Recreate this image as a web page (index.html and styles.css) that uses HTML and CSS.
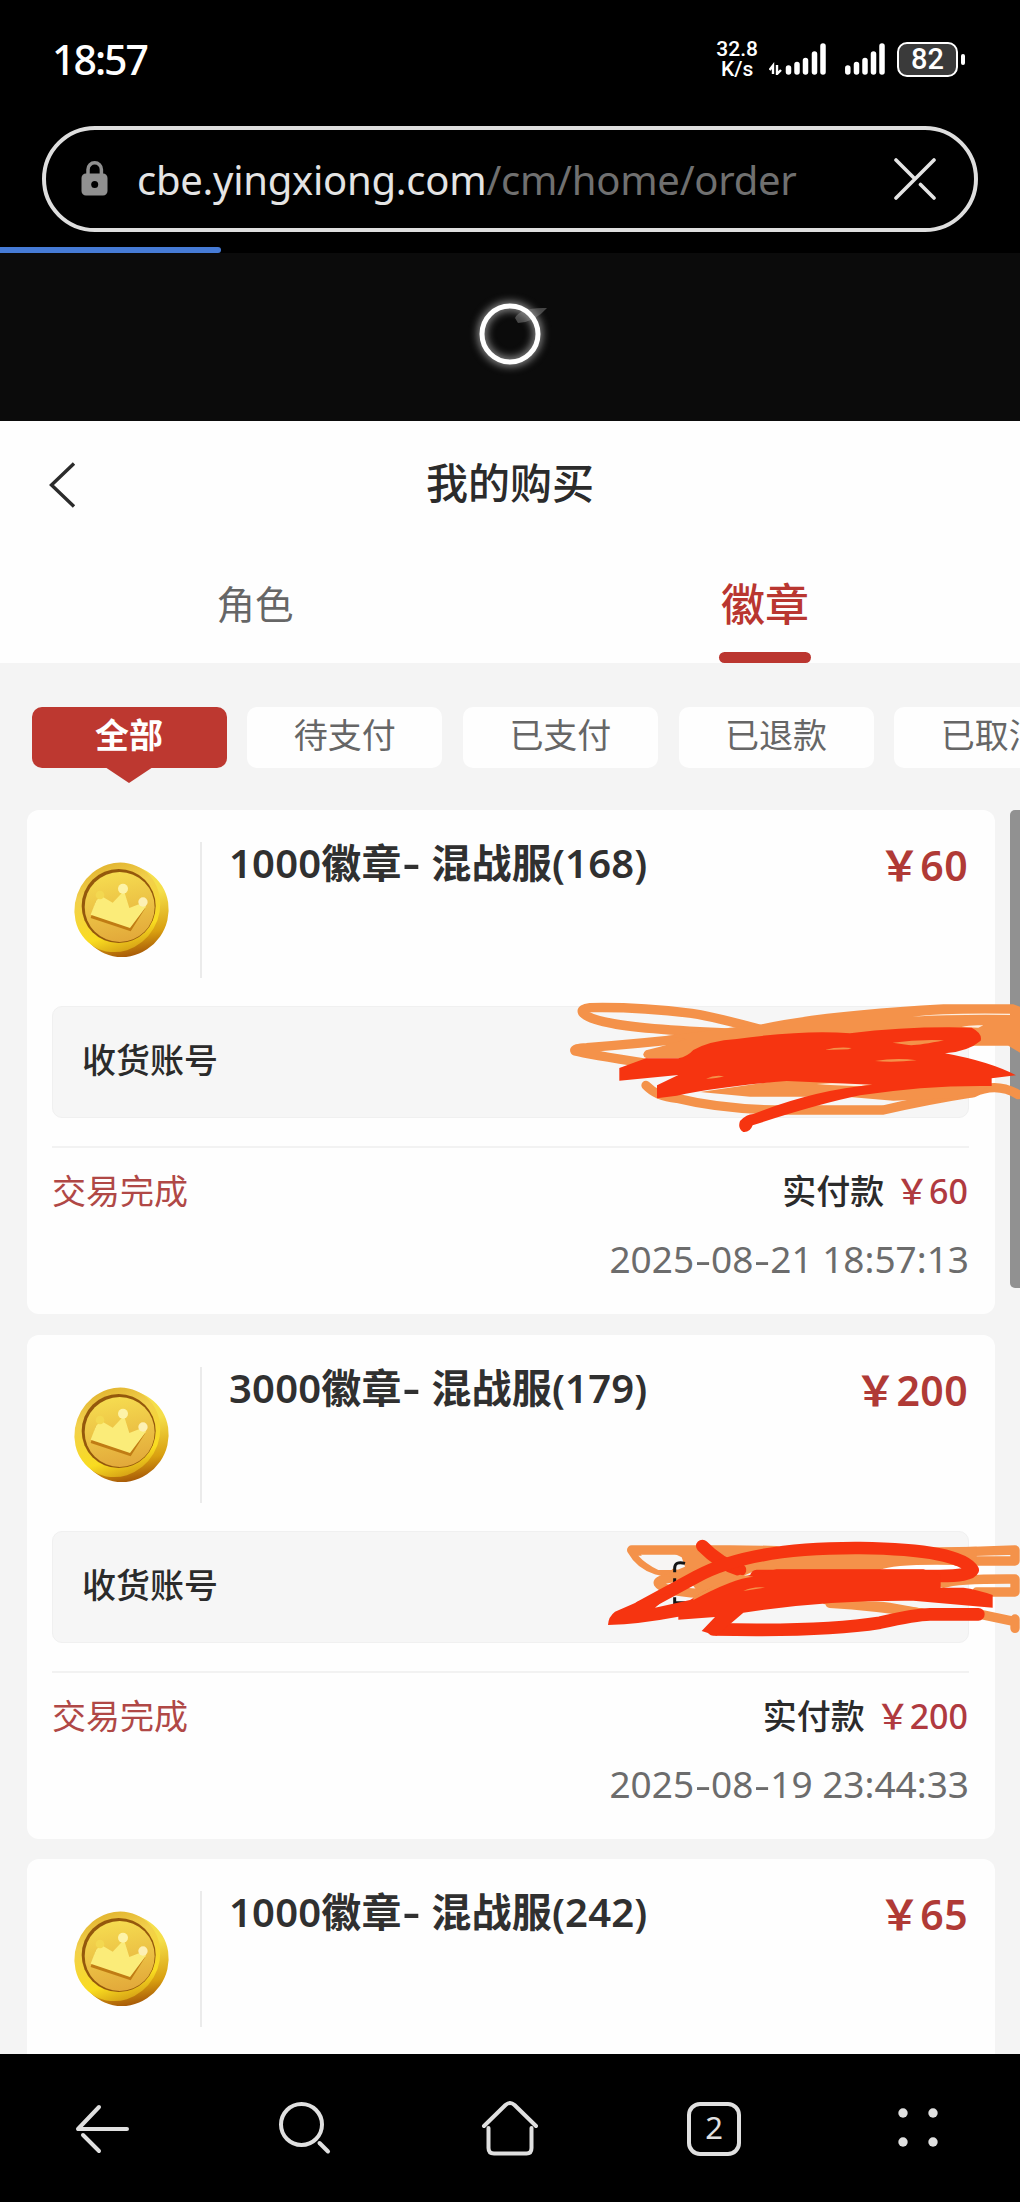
FILE: index.html
```html
<!DOCTYPE html>
<html lang="zh">
<head>
    <meta charset="UTF-8">
    <meta name="viewport" content="width=device-width, initial-scale=1.0">
    <title>我的购买</title>
    <link rel="stylesheet" href="styles.css">
</head>
<body>

<svg width="0" height="0" class="defs">
    <defs>
        <linearGradient id="rim" x1="0" y1="0" x2="1" y2="1">
            <stop offset="0" stop-color="#d9a520"/>
            <stop offset="0.35" stop-color="#f2d04c"/>
            <stop offset="0.7" stop-color="#f9dc20"/>
            <stop offset="1" stop-color="#b8700c"/>
        </linearGradient>
        <linearGradient id="side" x1="0" y1="0" x2="1" y2="1">
            <stop offset="0.4" stop-color="#f5df4a"/>
            <stop offset="0.7" stop-color="#d9a010"/>
            <stop offset="0.85" stop-color="#a95c08"/>
        </linearGradient>
        <linearGradient id="face" x1="0.4" y1="0" x2="0.6" y2="1">
            <stop offset="0" stop-color="#f6dc50"/>
            <stop offset="1" stop-color="#e2a83a"/>
        </linearGradient>
        <!-- 金币图标 -->
        <symbol id="coin" viewBox="0 0 480 420">
            <ellipse cx="221" cy="214" rx="133" ry="139" transform="rotate(35 221 214)" fill="url(#side)"/>
            <ellipse cx="202" cy="202" rx="126" ry="137" transform="rotate(30 202 202)" fill="url(#rim)"/>
            <ellipse cx="206" cy="198" rx="111" ry="111" fill="#94580c"/>
            <ellipse cx="209" cy="201" rx="105" ry="105" fill="url(#face)"/>
            <path d="M122 234L242 274L286 204L276 196L237 219L221 158L187 192L156 174L138 182Z" fill="#c07c14"/>
            <path d="M122 224L240 264L288 200L278 188L238 204L222 152L188 188L154 168L138 182Z" fill="#fbec79"/>
            <circle cx="150" cy="165" r="13" fill="#f3d850"/>
            <circle cx="219" cy="146" r="15" fill="#fdf3a8"/>
            <circle cx="279" cy="186" r="14" fill="#fdf0b4"/>
        </symbol>
    </defs>
</svg>

<div class="phone">
    <div class="status">
        <span class="time">18:57</span>
        <div class="status-right">
            <div class="speed"><span>32.8</span><span>K/s</span></div>
            <svg class="signal" width="57" height="32" viewBox="0 0 57 32">
                <path d="M0.500 27L4 22.500V31M8 22V31L12 27M8 26" fill="none" stroke="#fff" stroke-width="2.400"/>
                <path d="M19.500 25V29M28 21.500V29M36.500 17.500V29M45.500 11V29M54 3V29" stroke="#fff" stroke-width="5.500" stroke-linecap="round"/>
            </svg>
            <svg class="signal2" width="40" height="32" viewBox="0 0 40 32">
                <path d="M2.800 25V29M11.500 21.500V29M20 17.500V29M28.500 11V29M37 3V29" stroke="#fff" stroke-width="5.500" stroke-linecap="round"/>
            </svg>
            <div class="battery"><span>82</span></div>
            <i class="battery-tip"></i>
        </div>
    </div>

    <div class="address">
        <svg width="28" height="36" viewBox="0 0 28 36">
            <path d="M7 14V8.500a6.700 6.700 0 0 1 13.400 0V14" fill="none" stroke="#909090" stroke-width="3.500"/>
            <path d="M5 12.500H22a4.500 4.500 0 0 1 4.500 4.500V30a4.500 4.500 0 0 1-4.500 4.500H5A4.500 4.500 0 0 1 .5 30V17A4.500 4.500 0 0 1 5 12.500Z" fill="#909090"/>
            <circle cx="13.700" cy="23.500" r="3.500" fill="#000"/>
        </svg>
        <div class="url"><span class="host">cbe.yingxiong.com</span><span class="path">/cm/home/order</span></div>
        <svg class="close" width="42" height="42" viewBox="0 0 42 42" fill="none" stroke="#e4e4e4" stroke-width="3.600" stroke-linecap="round">
            <path d="M2 40L40 2M2 2L20 20M26.500 26.500L40 40"/>
        </svg>
    </div>
    <div class="progress"><div class="progress-bar"></div></div>

    <div class="loading">
        <svg width="100" height="100" viewBox="0 0 100 100">
            <path d="M55 34Q60 23 87 24Q75 38 58 39Z" fill="#555" opacity="0.8"/>
            <circle class="glow" cx="50" cy="50" r="28" fill="none" stroke="#999" stroke-width="8"/>
            <circle cx="50" cy="50" r="28" fill="none" stroke="#fff" stroke-width="5"/>
        </svg>
    </div>

    <div class="page">
        <div class="header">
            <svg class="back" width="28" height="48" viewBox="0 0 28 48" fill="none" stroke="#2b2b2b" stroke-width="3.400">
                <path d="M25 2.500L2.500 24L25 45.500"/>
            </svg>
            <h1>我的购买</h1>
        </div>
        <div class="tabs">
            <div class="tab"><span>角色</span></div>
            <div class="tab active"><span>徽章</span></div>
        </div>
        <div class="filters">
            <div class="filter on">全部</div>
            <div class="filter">待支付</div>
            <div class="filter">已支付</div>
            <div class="filter">已退款</div>
            <div class="filter">已取消</div>
        </div>

        <div class="list">
            <div class="card">
                <div class="goods">
                    <div class="pic"><svg width="160" height="140"><use href="#coin"/></svg></div>
                    <div class="name">1000徽章<i>-</i> 混战服(168)</div>
                    <div class="price">￥60</div>
                </div>
                <div class="account">
                    <span>收货账号</span>
                    <svg class="scribble s1" viewBox="0 0 1380 510">
                        <g fill="none" stroke="#f4924a" stroke-width="28" stroke-linecap="round" stroke-linejoin="round">
                            <path d="M600 148Q470 112 395 100Q230 80 90 83Q62 86 68 98Q85 117 145 128Q230 148 520 160"/>
                            <path d="M400 173Q250 190 80 203Q40 205 45 213Q80 222 260 250"/>
                            <path d="M258 316Q290 350 350 355Q500 392 700 390H970Q1100 360 1240 338Q1310 305 1375 344"/>
                        </g>
                        <g fill="#f4924a">
                            <path d="M320 168L510 143L600 134Q780 94 1150 73H1360L1380 80V218L1345 197H1200L480 260L400 235H260Q240 225 258 211L300 200L380 178Z"/>
                            <path d="M420 336L670 300L960 312L1290 316L1240 352L1000 362L860 350H570Z"/>
                        </g>
                        <path d="M1058 110Q1150 98 1350 101V105Q1180 103 1058 110ZM1205 141Q1230 134 1270 136L1255 143Z" fill="#fdeee0"/>
                        <path d="M770 312Q850 306 938 312L900 319Q820 316 770 312Z" fill="#fdeee0"/>
                        <path d="M178 264L258 235H355Q382 230 400 210Q450 182 530 177Q740 148 870 160Q1050 138 1235 143Q1268 160 1262 182Q1225 214 1155 220Q1290 245 1368 286L1295 295V318Q1100 315 900 346Q770 373 578 436Q570 458 550 456Q532 446 540 423Q560 402 580 402Q760 330 938 314L680 303Q480 320 350 347L291 355V316L355 285L178 302Z" fill="#f63410"/>
                        <path d="M998 188Q1070 178 1152 181Q1060 200 1040 194ZM795 210Q830 200 875 204L865 208ZM945 243Q1010 232 1070 241Q1000 248 945 243ZM438 296Q465 284 492 289Q470 296 438 296Z" fill="#f4924a"/>
                    </svg>
                </div>
                <div class="pay">
                    <span class="state">交易完成</span>
                    <span class="sum">实付款 <b>￥60</b></span>
                </div>
                <div class="date">2025<i>-</i>08<i>-</i>21 18:57:13</div>
            </div>

            <div class="card">
                <div class="goods">
                    <div class="pic"><svg width="160" height="140"><use href="#coin"/></svg></div>
                    <div class="name">3000徽章<i>-</i> 混战服(179)</div>
                    <div class="price">￥200</div>
                </div>
                <div class="account">
                    <span>收货账号</span>
                    <svg class="scribble s2" viewBox="0 0 1290 390">
                        <g fill="none" stroke="#f4924a" stroke-width="28" stroke-linecap="round" stroke-linejoin="round">
                            <path d="M560 92Q500 90 420 90H125Q150 135 200 150L290 170Q200 175 205 190Q220 215 330 220"/>
                            <path d="M1130 95L1275 90V123H1150M1060 190Q1100 176 1275 177V216H1160"/>
                            <path d="M720 250Q850 258 1000 280M1175 284L1275 305V325V297"/>
                        </g>
                        <path d="M250 88H600L1160 80V138H960L870 150H500L330 225L290 170H210L285 140L275 112L250 100Z" fill="#f4924a"/>
                        <path d="M145 107H250Q270 115 262 122L245 150L205 150Q165 130 145 107Z" fill="#f7f5f3"/>
                        <path d="M285 130Q254 122 254 145V157M254 175V195M254 232V248H290" fill="none" stroke="#151515" stroke-width="9"/>
                        <path d="M700 245Q850 240 900 248L1000 266V285Q850 270 700 252Z" fill="#f4924a"/>
                        <path d="M870 150Q910 132 1090 135L1115 144L1040 150Z" fill="#fff"/>
                        <g fill="none" stroke="#f63410" stroke-width="38" stroke-linecap="round" stroke-linejoin="round">
                            <path d="M337 78Q390 132 450 150"/>
                            <path d="M150 262L320 170Q480 82 810 84Q1110 88 1148 150Q1140 168 1050 168H500"/>
                            <path d="M370 328Q700 335 870 308Q980 283 1020 283H1165"/>
                        </g>
                        <path d="M54 315Q55 290 75 275L190 225L245 220L195 263L300 240Q390 180 480 165L560 148H1000L1052 165V203H1120Q1160 208 1208 225V263L970 242Q700 240 460 278L424 309L380 347L335 333L375 291L265 299V290Q150 312 54 315Z" fill="#f63410"/>
                        <path d="M310 232Q400 178 450 164L490 170Q430 175 310 240ZM460 213Q490 199 525 203Z" fill="#f4924a"/>
                    </svg>
                </div>
                <div class="pay">
                    <span class="state">交易完成</span>
                    <span class="sum">实付款 <b>￥200</b></span>
                </div>
                <div class="date">2025<i>-</i>08<i>-</i>19 23:44:33</div>
            </div>

            <div class="card">
                <div class="goods">
                    <div class="pic"><svg width="160" height="140"><use href="#coin"/></svg></div>
                    <div class="name">1000徽章<i>-</i> 混战服(242)</div>
                    <div class="price">￥65</div>
                </div>
                <div class="account"></div>
            </div>
            <div class="scrollbar"></div>
        </div>
    </div>

    <div class="toolbar">
        <svg width="60" height="60" viewBox="0 0 60 60"><path d="M6 30H55M27 8L6 30M11 36L27 52"/></svg>
        <svg width="60" height="60" viewBox="0 0 60 60"><circle cx="25.500" cy="25.500" r="20.500"/><path d="M43.500 44L52 52.500"/></svg>
        <svg width="60" height="60" viewBox="0 0 60 60"><path d="M4 27L25.500 6Q30 2 34.500 6L56 27M8.500 29V49Q8.500 54.500 14 54.500H46.500Q51.500 54.500 51.500 49V29"/></svg>
        <div class="pages">2</div>
        <svg class="more" width="60" height="60" viewBox="0 0 60 60"><circle cx="15" cy="14" r="4.700"/><circle cx="45" cy="14" r="4.700"/><circle cx="15" cy="43" r="4.700"/><circle cx="45" cy="43" r="4.700"/></svg>
    </div>
</div>
</body>
</html>
```

FILE: styles.css
```css
body, html {
    margin: 0;
    padding: 0;
    height: 100%;
    background: #000;
    font-family: "Noto Sans", "Noto Sans CJK SC", sans-serif;
}

* {
    box-sizing: border-box;
}

i {
    font-style: normal;
}

.defs {
    position: absolute;
}

.phone {
    width: 1020px;
    height: 2202px;
    display: flex;
    flex-direction: column;
    overflow: hidden;
}

/* 状态栏 */
.status {
    height: 126px;
    padding: 0 55px 8px 52px;
    display: flex;
    align-items: center;
    justify-content: space-between;
    flex-shrink: 0;
    color: #fff;
}
.time {
    font-size: 41px;
    font-weight: 500;
    letter-spacing: -2px;
}
.status-right {
    display: flex;
    align-items: center;
}
.speed {
    display: flex;
    flex-direction: column;
    align-items: center;
    font-family: Roboto, sans-serif;
    font-size: 21px;
    font-weight: 500;
    line-height: 20px;
    margin-right: 11px;
}
.signal2 {
    margin: 0 12px 0 19px;
}
.battery {
    width: 61px;
    height: 35px;
    border: 2.5px solid #fff;
    border-radius: 10px;
    background: #3a3a3a;
    font-family: Roboto, sans-serif;
    font-size: 29px;
    font-weight: 500;
    line-height: 31px;
    text-align: center;
}
.battery-tip {
    width: 4px;
    height: 11px;
    margin-left: 3px;
    border-radius: 2px;
    background: #fff;
}

/* 地址栏 */
.address {
    height: 106px;
    margin: 0 42px;
    padding: 0 38px 0 35px;
    border: 4.5px solid #dedede;
    border-radius: 53px;
    display: flex;
    align-items: center;
    flex-shrink: 0;
}
.url {
    flex: 1;
    margin-left: 28px;
    padding-top: 2px;
    font-size: 40px;
    line-height: 60px;
    letter-spacing: -0.25px;
    color: #e4e4e4;
    white-space: nowrap;
}
.url .path {
    color: #707070;
}
.progress {
    height: 6px;
    margin-top: 15px;
    flex-shrink: 0;
}
.progress-bar {
    width: 221px;
    height: 6px;
    border-radius: 0 3px 3px 0;
    background: #467bd6;
}

.loading {
    height: 168px;
    background: #0b0b0b;
    display: flex;
    align-items: center;
    justify-content: center;
    flex-shrink: 0;
    padding-bottom: 6px;
}
.glow {
    filter: blur(4px);
}

.page {
    flex: 1;
    min-height: 0;
    overflow: hidden;
    background: #f4f4f4;
}
.header {
    height: 127px;
    padding: 0 49px;
    display: flex;
    align-items: center;
    background: #fefefe;
}
.header h1 {
    flex: 1;
    margin: 0 28px 9px 0;
    text-align: center;
    font-size: 42px;
    font-weight: 500;
    color: #2b2b2b;
}
.tabs {
    height: 115px;
    display: flex;
    background: #fefefe;
}
.tab {
    flex: 1;
    display: flex;
    flex-direction: column;
    align-items: center;
    justify-content: space-between;
    font-size: 38.5px;
    line-height: 112px;
    color: #666;
}
.tab.active {
    font-size: 44px;
    font-weight: 500;
    color: #b93630;
}
.tab span {
    height: 104px;
}
.tab.active::after {
    content: "";
    width: 92px;
    height: 11px;
    border-radius: 6px;
    background: #bb3630;
}

/* 订单状态筛选 */
.filters {
    display: flex;
    gap: 20.7px;
    padding: 44px 0 42px 31.5px;
}
.filter {
    position: relative;
    width: 195px;
    height: 61px;
    flex-shrink: 0;
    border-radius: 10px;
    background: #fefefe;
    color: #666;
    font-size: 34px;
    line-height: 57px;
    text-align: center;
}
.filter.on {
    background: #bd3830;
    color: #fff;
    font-weight: bold;
}
.filter.on::after {
    content: "";
    position: absolute;
    left: 73px;
    bottom: -15px;
    border: 24px solid transparent;
    border-top: 16px solid #bd3830;
    border-bottom: none;
}

.list {
    position: relative;
    padding: 0 25px 0 27px;
}
.card {
    height: 504px;
    margin-bottom: 20.5px;
    padding: 32px 26px 0 25px;
    border-radius: 12px;
    background: #fefefe;
}
.goods {
    height: 136px;
    display: flex;
}
.pic {
    width: 150px;
    border-right: 2px solid #ebebeb;
}
.pic svg {
    display: block;
    margin: -2px 0 0 -2px;
}
.name {
    flex: 1;
    padding-left: 27px;
    font-size: 40px;
    line-height: 41px;
    font-weight: 600;
    letter-spacing: 0.2px;
    color: #303030;
    white-space: nowrap;
}
.name i, .date i {
    display: inline-block;
    margin: 0 3px;
    transform: scaleX(1.35);
}
.price {
    padding-right: 1px;
    font-size: 41px;
    line-height: 46px;
    font-weight: 600;
    letter-spacing: 0.4px;
    color: #b03a36;
}
.account {
    position: relative;
    height: 112px;
    margin-top: 28px;
    padding-left: 29px;
    border: 1px solid #f0f0f0;
    border-radius: 10px;
    background: #f6f6f6;
    font-size: 34px;
    line-height: 106px;
    font-weight: 500;
    color: #2b2b2b;
}
/* 涂抹遮挡账号 */
.scribble {
    position: absolute;
    z-index: 2;
}
.s1 {
    left: 507px;
    top: -27px;
    width: 460px;
    height: 170px;
}
.s2 {
    left: 537px;
    top: -12px;
    width: 430px;
    height: 130px;
}
.pay {
    display: flex;
    justify-content: space-between;
    margin-top: 28px;
    border-top: 2px solid #f2f2f2;
    font-size: 34px;
    line-height: 86px;
    color: #2b2b2b;
}
.state {
    color: #b04846;
}
.sum {
    font-weight: 500;
    padding-right: 1px;
}
.sum b {
    margin-left: 2px;
    font-weight: 500;
    color: #b03a40;
}
.date {
    line-height: 50px;
    text-align: right;
    font-size: 37px;
    color: #6c6c6c;
}
.date i {
    margin: 0 2px 0 3px;
}
.scrollbar {
    position: absolute;
    right: 0;
    top: 0;
    width: 10px;
    height: 478px;
    border-radius: 5px 0 0 5px;
    background: #919191;
}

.toolbar {
    height: 148px;
    padding-top: 2px;
    flex-shrink: 0;
    display: grid;
    grid-template-columns: repeat(5, 1fr);
    place-items: center;
    background: #000;
}
.toolbar svg {
    fill: none;
    stroke: #e0e0e0;
    stroke-width: 4;
    stroke-linecap: round;
    stroke-linejoin: round;
}
.toolbar .more {
    fill: #e0e0e0;
    stroke: none;
}
.pages {
    width: 54px;
    height: 54px;
    border: 4px solid #e0e0e0;
    border-radius: 13px;
    color: #e0e0e0;
    font-size: 31px;
    line-height: 43px;
    text-align: center;
}
```
